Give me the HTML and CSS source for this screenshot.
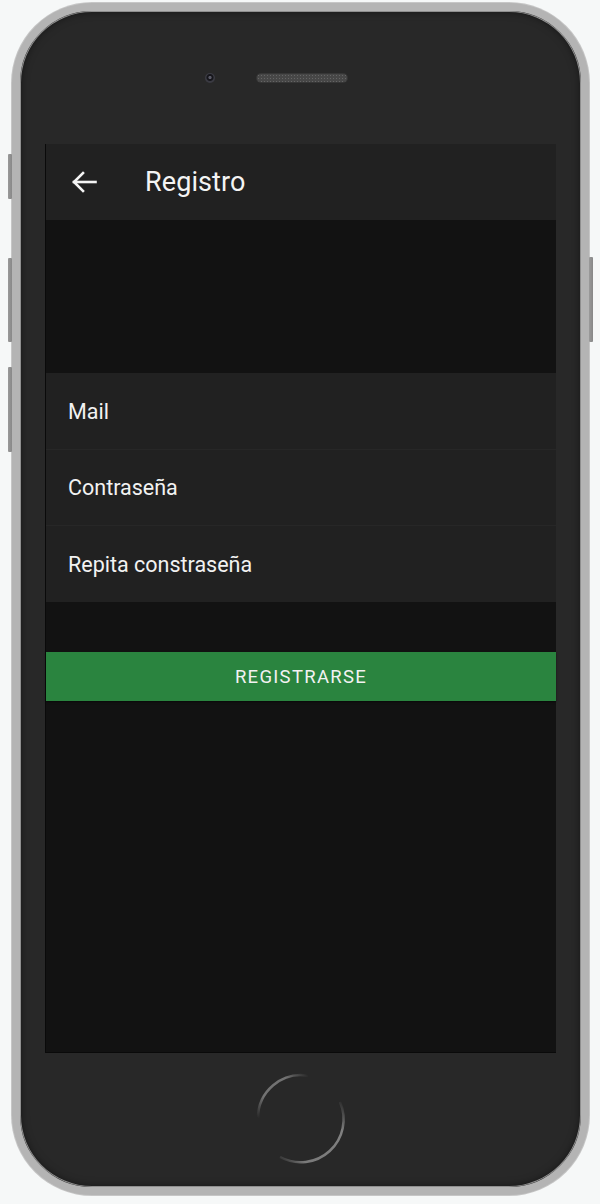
FILE: index.html
```html
<!DOCTYPE html>
<html lang="es">
<head>
<meta charset="utf-8">
<title>Registro</title>
<link rel="stylesheet" href="styles.css">
</head>
<body>
<div class="phone">
  <div class="side-btn left b1"></div>
  <div class="side-btn left b2"></div>
  <div class="side-btn left b3"></div>
  <div class="side-btn right b4"></div>
  <div class="top">
    <div class="camera"></div>
    <div class="speaker"></div>
  </div>
  <div class="screen">
    <div class="header">
      <svg class="back" width="26" height="24" viewBox="0 0 26 24" fill="none" stroke="#f4f4f4" stroke-width="2.6" stroke-linecap="square">
        <line x1="3" y1="12" x2="24.5" y2="12"/>
        <polyline points="12,3 3,12 12,21" stroke-linejoin="miter"/>
      </svg>
      <div class="title">Registro</div>
    </div>
    <div class="spacer"></div>
    <div class="list">
      <div class="row">Mail</div>
      <div class="row">Contraseña</div>
      <div class="row">Repita constraseña</div>
    </div>
    <div class="gap"></div>
    <div class="button">REGISTRARSE</div>
  </div>
  <div class="bottom">
    <svg class="home" width="100" height="100" viewBox="0 0 100 100" fill="none">
      <defs>
        <linearGradient id="g1" x1="0" y1="1" x2="1" y2="0">
          <stop offset="0" stop-color="#727272" stop-opacity="0"/>
          <stop offset="0.3" stop-color="#727272"/>
          <stop offset="0.75" stop-color="#727272"/>
          <stop offset="1" stop-color="#727272" stop-opacity="0"/>
        </linearGradient>
        <linearGradient id="g2" x1="1" y1="0" x2="0" y2="1">
          <stop offset="0" stop-color="#808080" stop-opacity="0"/>
          <stop offset="0.25" stop-color="#808080"/>
          <stop offset="0.8" stop-color="#7a7a7a"/>
          <stop offset="1" stop-color="#7a7a7a" stop-opacity="0"/>
        </linearGradient>
      </defs>
      <path d="M7 50 A43 43 0 0 1 57 7.6" stroke="url(#g1)" stroke-width="2.5"/>
      <path d="M89 34 A43 43 0 0 1 29 89" stroke="url(#g2)" stroke-width="2.5"/>
    </svg>
  </div>
</div>
</body>
</html>
```

FILE: styles.css
```css
html, body {
  margin: 0;
  padding: 0;
}
body {
  background: #f6f8f8;
  font-family: Roboto, "Liberation Sans", Arial, sans-serif;
  height: 1204px;
  overflow: hidden;
}
.phone {
  position: relative;
  box-sizing: border-box;
  width: 577px;
  height: 1192px;
  margin: 3px 0 0 12px;
  border: 8px solid #b4b4b4;
  border-radius: 80px;
  background: #282828;
  box-shadow: inset 0 0 0 1px #8f8f8f, inset 0 0 8px rgba(0,0,0,0.55), 0 0 0 1px #c6c6c6;
  display: flex;
  flex-direction: column;
  align-items: center;
}
.side-btn {
  position: absolute;
  width: 4px;
  background: linear-gradient(90deg, #9a9a9a, #888);
  border-radius: 1px;
}
.side-btn.left { left: -12px; }
.side-btn.right { right: -12px; }
.b1 { top: 143px; height: 45px; }
.b2 { top: 247px; height: 84px; }
.b3 { top: 356px; height: 85px; }
.b4 { top: 246px; height: 85px; }

.top {
  height: 133px;
  width: 100%;
  box-sizing: border-box;
  padding-left: 185px;
  display: flex;
  align-items: center;
  gap: 42px;
}
.camera {
  width: 10px;
  height: 10px;
  border-radius: 50%;
  background: radial-gradient(circle at 50% 45%, #5a5a66 0 1.2px, #16161b 2px 3px, #3a3a42 4px);
}
.speaker {
  width: 90px;
  height: 8px;
  border-radius: 4px;
  background-color: #474747;
  background-image: radial-gradient(circle, #656565 0.8px, transparent 1px);
  background-size: 3px 3px;
  box-shadow: 0 0 0 1px #363636;
}

.screen {
  width: 511px;
  height: 909px;
  box-sizing: border-box;
  border-left: 1px solid #0a0a0a;
  border-bottom: 1px solid #0a0a0a;
  background: #121212;
  display: flex;
  flex-direction: column;
}
.header {
  height: 76px;
  flex: none;
  background: #212121;
  display: flex;
  align-items: center;
  padding-left: 25px;
}
.back { flex: none; }
.title {
  margin-left: 48px;
  color: #f4f4f4;
  font-size: 27px;
  letter-spacing: 0.1px;
}
.spacer {
  height: 153px;
  flex: none;
}
.list {
  background: #212121;
  flex: none;
}
.row {
  height: 76px;
  box-sizing: border-box;
  display: flex;
  align-items: center;
  padding-left: 22px;
  color: #f2f2f2;
  font-size: 21.5px;
  border-top: 1px solid #272727;
}
.row:first-child { border-top: none; }
.row:last-child { height: 77px; }
.gap {
  height: 50px;
  flex: none;
}
.button {
  height: 49px;
  flex: none;
  background: #2a843f;
  color: #f2f2f2;
  font-size: 18.5px;
  letter-spacing: 1.3px;
  display: flex;
  align-items: center;
  justify-content: center;
  box-shadow: 0 1px 2px rgba(0,0,0,0.5);
}

.bottom {
  flex: 1;
  width: 100%;
  display: flex;
  align-items: center;
  justify-content: center;
  padding-bottom: 4px;
  box-sizing: border-box;
}
.home {
  display: block;
  margin-left: 1px;
}
```
